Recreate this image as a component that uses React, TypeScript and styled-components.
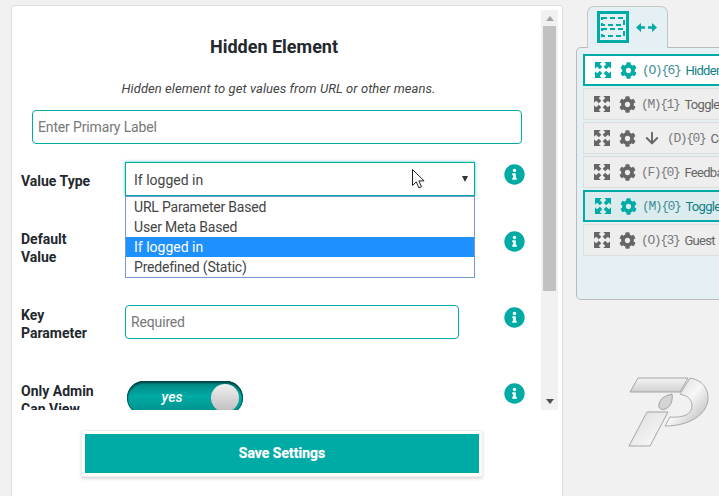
import React from 'react';
import styled, { createGlobalStyle } from 'styled-components';
import { FaCog, FaInfoCircle } from 'react-icons/fa';
import { ArrowDown } from 'lucide-react';

const teal = '#00aba5';

const GlobalStyle = createGlobalStyle`
  html, body {
    margin: 0;
    height: 100%;
    background: #f1f1f1;
    font-family: Roboto, "Liberation Sans", sans-serif;
    overflow: hidden;
  }
`;

const Page = styled.div`
  display: flex;
  width: 719px;
  height: 496px;
  padding: 5px 0 0 11px;
  box-sizing: border-box;
  overflow: hidden;
`;

const Card = styled.section`
  flex: none;
  width: 552px;
  height: 520px;
  box-sizing: border-box;
  background: #fff;
  border: 1px solid #ddd;
  border-radius: 3px;
  padding-top: 4px;
`;

const ScrollArea = styled.div`
  display: flex;
  height: 400px;
  overflow: hidden;
`;

const Form = styled.div`
  flex: 1;
  padding-top: 27px;
  min-width: 0;
`;

const Title = styled.h1`
  margin: 0;
  font-size: 18px;
  line-height: 20px;
  font-weight: 700;
  color: #23282d;
  text-align: center;
  padding-right: 5px;
`;

const Subtitle = styled.p`
  margin: 23px 0 0;
  font-size: 13px;
  line-height: 18px;
  font-style: italic;
  letter-spacing: 0.06px;
  color: #444;
  text-align: center;
  padding-left: 4px;
`;

const TextInput = styled.input<{ $width: number }>`
  display: block;
  width: ${(p) => p.$width}px;
  height: 34px;
  box-sizing: border-box;
  padding: 0 5px;
  border: 1px solid ${teal};
  border-radius: 4px;
  font: 14px Roboto, sans-serif;
  letter-spacing: -0.15px;
  background: #fff;
  outline: none;
  &::placeholder {
    color: #777;
    opacity: 1;
  }
`;

const PrimaryLabel = styled.div`
  margin: 12px 0 18px 20px;
`;

const Row = styled.div<{ $height: number }>`
  display: grid;
  grid-template-columns: 104px 379px 21px;
  height: ${(p) => p.$height}px;
  margin-left: 9px;
  align-items: start;
`;

const Label = styled.div<{ $top: number }>`
  padding-top: ${(p) => p.$top}px;
  font-size: 14px;
  line-height: 18px;
  font-weight: 700;
  color: #23282d;
`;

const Field = styled.div`
  position: relative;
`;

const Select = styled.div`
  position: relative;
  display: flex;
  align-items: center;
  width: 350px;
  height: 34px;
  box-sizing: border-box;
  padding: 1px 8px 0;
  border: 1px solid ${teal};
  box-shadow: 0 0 3px rgba(0, 171, 165, 0.7);
  font-size: 14px;
  color: #444;
  background: #fff;
`;

const Caret = styled.span`
  position: absolute;
  right: 6px;
  top: 13px;
  border-left: 3.5px solid transparent;
  border-right: 3.5px solid transparent;
  border-top: 6px solid #333;
`;

const OptionList = styled.ul`
  position: absolute;
  z-index: 2;
  left: 0;
  top: 34px;
  width: 350px;
  box-sizing: border-box;
  margin: 0;
  padding: 0;
  list-style: none;
  background: #fff;
  border: 1px solid #7b96d4;
`;

const Option = styled.li<{ $selected?: boolean }>`
  height: 20px;
  line-height: 20px;
  padding-left: 8px;
  font-size: 14px;
  letter-spacing: ${(p) => (p.$selected ? '0' : '-0.2px')};
  color: ${(p) => (p.$selected ? '#fff' : '#444')};
  background: ${(p) => (p.$selected ? '#1e90ff' : 'transparent')};
`;

const Pointer = styled.svg`
  position: absolute;
  z-index: 3;
  left: 286px;
  top: 6px;
`;

const InfoButton = styled.span<{ $top: number }>`
  display: block;
  height: 21px;
  margin-top: ${(p) => p.$top}px;
  color: ${teal};
  font-size: 21px;
  line-height: 0;
`;

const Toggle = styled.div`
  display: flex;
  align-items: center;
  width: 116px;
  height: 34px;
  margin-left: 2px;
  box-sizing: border-box;
  padding: 3px 4px 3px 0;
  border-radius: 17px;
  background: linear-gradient(#00807c, #00aba5 45%, #008d88);
  box-shadow: inset 0 2px 2px #00413f, inset 0 0 0 1px #006f6b;
`;

const ToggleText = styled.span`
  flex: 1;
  text-align: center;
  padding: 0 0 2px 6px;
  font-size: 14px;
  font-style: italic;
  font-weight: 500;
  color: #fff;
`;

const Knob = styled.span`
  width: 28px;
  height: 28px;
  border-radius: 50%;
  background: linear-gradient(#f1f1f1, #bdbdbd);
`;

const Scrollbar = styled.div`
  flex: none;
  display: flex;
  flex-direction: column;
  align-items: center;
  width: 17px;
  height: 400px;
  margin-right: 4px;
  background: #f1f1f1;
`;

const ScrollArrow = styled.span<{ $up?: boolean }>`
  flex: none;
  margin: ${(p) => (p.$up ? '6px 0 5px' : 'auto 0 6px')};
  border-left: 4px solid transparent;
  border-right: 4px solid transparent;
  ${(p) => (p.$up ? 'border-bottom: 5px solid #a3a3a3;' : 'border-top: 5px solid #505050;')}
`;

const ScrollThumb = styled.div`
  width: 13px;
  height: 265px;
  background: #c1c1c1;
`;

const SaveBox = styled.div`
  width: 394px;
  margin: 20px 0 0 69px;
  padding: 3px;
  border: 1px solid #eee;
  border-radius: 2px;
  box-shadow: 0 2px 3px rgba(0, 0, 0, 0.14);
`;

const SaveButton = styled.button`
  display: block;
  width: 100%;
  height: 39px;
  padding: 0 0 2px;
  border: 0;
  background: ${teal};
  color: #fff;
  font: 700 14px Roboto, sans-serif;
  text-shadow: 0 0 1px rgba(255, 255, 255, 0.5);
`;

const Sidebar = styled.aside`
  flex: none;
  width: 200px;
  margin: 1px 0 0 13px;
`;

const Tab = styled.div`
  position: relative;
  z-index: 1;
  display: flex;
  align-items: center;
  gap: 7px;
  width: 81px;
  height: 42px;
  box-sizing: border-box;
  margin: 0 0 -1px 11px;
  padding: 0 0 1px 9px;
  background: #e4f0f3;
  border: 1px solid #c6c6c6;
  border-bottom: 0;
  border-radius: 7px 7px 0 0;
`;

const Panel = styled.div`
  height: 253px;
  box-sizing: border-box;
  padding: 6px 0 0 6px;
  background: #e4f0f3;
  border: 1px solid #bbb;
  border-radius: 5px;
  display: flex;
  flex-direction: column;
  gap: 2px;
`;

const FieldRow = styled.div<{ $state?: 'open' | 'active' }>`
  display: flex;
  align-items: center;
  flex: none;
  height: 32px;
  box-sizing: border-box;
  padding-left: 10px;
  white-space: nowrap;
  overflow: hidden;
  border: ${(p) => (p.$state ? `2px solid ${teal}` : '1px solid #ddd')};
  background: ${(p) => (p.$state === 'open' ? '#fff' : p.$state === 'active' ? '#dcecee' : '#eeeeee')};
  color: ${(p) => (p.$state ? teal : '#666')};
  svg {
    flex: none;
  }
`;

const GearSlot = styled.span`
  display: flex;
  margin: 0 5px 0 9px;
`;

const DownSlot = styled.span`
  display: flex;
  margin: 0 6px 0 2px;
`;

const Code = styled.span<{ $state?: 'open' | 'active' }>`
  font: 13px "Liberation Mono", monospace;
  letter-spacing: -1.4px;
  margin-right: 5px;
  color: ${(p) => (p.$state ? '#3d8f96' : '#7a7a7a')};
`;

const Name = styled.span<{ $state?: 'open' | 'active' }>`
  font-size: 13px;
  letter-spacing: -0.7px;
  color: ${(p) => (p.$state ? '#0f7f86' : '#666')};
`;

const Logo = styled.svg`
  display: block;
  margin: 76px 0 0 52px;
`;

const rows: { code: string; name: string; state?: 'open' | 'active'; down?: boolean }[] = [
  { code: '(O){6}', name: 'Hidden', state: 'open' },
  { code: '(M){1}', name: 'Toggle' },
  { code: '(D){0}', name: 'Co', down: true },
  { code: '(F){0}', name: 'Feedba' },
  { code: '(M){0}', name: 'Toggle', state: 'active' },
  { code: '(O){3}', name: 'Guest' },
];

const Info = ({ top = 2 }: { top?: number }) => (
  <InfoButton $top={top}>
    <FaInfoCircle />
  </InfoButton>
);

// four corner arrows, one drawn and rotated round the middle
const ExpandIcon = () => (
  <svg width="16" height="16" viewBox="0 0 16 16" fill="currentColor">
    {[0, 90, 180, 270].map((a) => (
      <path key={a} d="M0 0h6.8L4.7 2.1l2.6 2.7-2.5 2.5-2.7-2.6L0 6.8z" transform={`rotate(${a} 8 8)`} />
    ))}
  </svg>
);

const LeftRightIcon = () => (
  <svg width="21" height="9" viewBox="0 0 21 9" fill={teal}>
    <path d="M0 4.5 5 0v3.2h4v2.6H5V9z" />
    <path d="M21 4.5 16 0v3.2h-4v2.6h4V9z" />
  </svg>
);

export default function App() {
  return (
    <Page>
      <GlobalStyle />
      <Card>
        <ScrollArea>
          <Form>
            <Title>Hidden Element</Title>
            <Subtitle>Hidden element to get values from URL or other means.</Subtitle>
            <PrimaryLabel>
              <TextInput $width={490} placeholder="Enter Primary Label" readOnly />
            </PrimaryLabel>
            <Row $height={68}>
              <Label $top={10}>Value Type</Label>
              <Field>
                <Select>
                  If logged in
                  <Caret />
                </Select>
                <Pointer width="14" height="22" viewBox="0 0 14 22">
                  <path
                    d="M1.5 1.5v16l3.8-3.6 2.6 6 2.6-1.1-2.6-5.9h5.2z"
                    fill="#fff"
                    stroke="#222"
                    strokeWidth="1"
                  />
                </Pointer>
                <OptionList>
                  <Option>URL Parameter Based</Option>
                  <Option>User Meta Based</Option>
                  <Option $selected>If logged in</Option>
                  <Option>Predefined (Static)</Option>
                </OptionList>
              </Field>
              <Info />
            </Row>
            <Row $height={75}>
              <Label $top={0}>
                Default
                <br />
                Value
              </Label>
              <Field />
              <Info top={1} />
            </Row>
            <Row $height={76}>
              <Label $top={1}>
                Key
                <br />
                Parameter
              </Label>
              <Field>
                <TextInput $width={334} placeholder="Required" readOnly />
              </Field>
              <Info />
            </Row>
            <Row $height={60}>
              <Label $top={1}>
                Only Admin
                <br />
                Can View
              </Label>
              <Field>
                <Toggle>
                  <ToggleText>yes</ToggleText>
                  <Knob />
                </Toggle>
              </Field>
              <Info />
            </Row>
          </Form>
          <Scrollbar>
            <ScrollArrow $up />
            <ScrollThumb />
            <ScrollArrow />
          </Scrollbar>
        </ScrollArea>
        <SaveBox>
          <SaveButton>Save Settings</SaveButton>
        </SaveBox>
      </Card>
      <Sidebar>
        <Tab>
          <svg width="32" height="32" viewBox="0 0 32 32" fill="none" stroke={teal}>
            <rect x="1.5" y="1.5" width="29" height="29" strokeWidth="3" />
            <rect x="5" y="7" width="22" height="7" strokeWidth="2" strokeDasharray="5 3" />
            <rect x="5" y="18" width="22" height="7" strokeWidth="2" strokeDasharray="5 3" />
          </svg>
          <LeftRightIcon />
        </Tab>
        <Panel>
          {rows.map((r) => (
            <FieldRow key={r.code + r.name} $state={r.state}>
              <ExpandIcon />
              <GearSlot>
                <FaCog size={17} />
              </GearSlot>
              {r.down && (
                <DownSlot>
                  <ArrowDown size={18} strokeWidth={2.5} />
                </DownSlot>
              )}
              <Code $state={r.state}>{r.code}</Code>
              <Name $state={r.state}>{r.name}</Name>
            </FieldRow>
          ))}
        </Panel>
        <Logo width="82" height="72" viewBox="628 375 82 72">
          <defs>
            <linearGradient id="bar" x1="0" y1="0" x2="0" y2="1">
              <stop offset="0" stopColor="#f4f4f4" />
              <stop offset="1" stopColor="#d0d0d0" />
            </linearGradient>
            <linearGradient id="leg" x1="0" y1="0" x2="1" y2="1">
              <stop offset="0" stopColor="#dcdcdc" />
              <stop offset="1" stopColor="#fdfdfd" />
            </linearGradient>
            <linearGradient id="bowl" x1="0" y1="0" x2="1" y2="1">
              <stop offset="0" stopColor="#cfcfcf" />
              <stop offset="0.5" stopColor="#f7f7f7" />
              <stop offset="1" stopColor="#b0b0b0" />
            </linearGradient>
          </defs>
          <path d="M638 377h50l-8 14h-50z" fill="url(#bar)" stroke="#9d9d9d" strokeWidth="0.9" />
          <path d="M647 411h21l-18 34h-21z" fill="url(#leg)" stroke="#9d9d9d" strokeWidth="0.9" />
          <path
            d="M690 377c12 2 18 10 18 20 0 16-18 28-43 28l5-9c14 1 22-3 22-11 0-6-4-10-9-11l-3-1z"
            fill="url(#bowl)"
            stroke="#a2a2a2"
            strokeWidth="0.9"
          />
          <path
            d="M672 393c1 6-1 12-5 14-5 3-9 1-8-4 1-5 5-8 13-10z"
            fill="#d4d4d4"
            stroke="#999"
            strokeWidth="0.9"
          />
        </Logo>
      </Sidebar>
    </Page>
  );
}
